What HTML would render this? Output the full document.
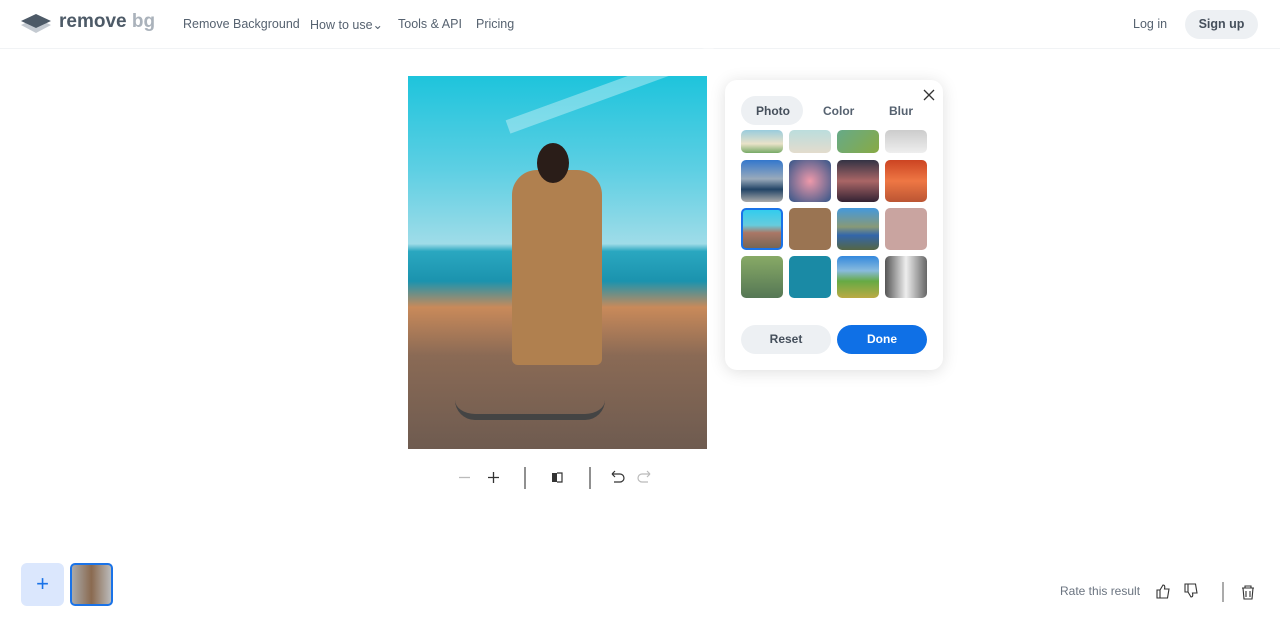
<!DOCTYPE html>
<html><head><meta charset="utf-8"><style>
*{margin:0;padding:0;box-sizing:border-box}
body{width:1280px;height:624px;background:#fff;font-family:"Liberation Sans",sans-serif;position:relative;overflow:hidden;color:#454f5b}
.a{position:absolute}
.nav{font-size:12.5px;color:#566270;top:17px}
.t{position:absolute;width:42px;height:42px;border-radius:5px}
</style></head><body>
<div class="a" style="left:0;top:48px;width:1280px;height:1px;background:#f1f3f5"></div>
<svg class="a" style="left:20px;top:13px" width="32" height="22" viewBox="0 0 32 22"><path d="M1 12 L16 20 L31 12 L16 5Z" fill="#c4cad1"/><path d="M1 8 L16 1 L31 8 L16 15Z" fill="#4d5a67"/></svg>
<div class="a" style="left:59px;top:11px;font-size:19px;font-weight:bold;color:#4d5a67">remove<span style="color:#aab2bb"> bg</span></div>
<div class="a nav" style="left:183px">Remove Background</div>
<div class="a nav" style="left:310px">How to use⌄</div>
<div class="a nav" style="left:398px">Tools &amp; API</div>
<div class="a nav" style="left:476px">Pricing</div>
<div class="a nav" style="left:1133px">Log in</div>
<div class="a" style="left:1185px;top:10px;width:73px;height:29px;border-radius:15px;background:#edf0f3;font-size:12.5px;font-weight:bold;color:#454f5b;text-align:center;line-height:29px">Sign up</div>

<div class="a" style="left:408px;top:76px;width:299px;height:373px;background:linear-gradient(180deg,#1ec4dc 0%,#5dcfe3 25%,#9fdce8 45%,#2aa7c0 47%,#1b93ae 55%,#c98a5a 62%,#8a6a55 75%,#6e5b50 100%)"></div>
<div class="a" style="left:508px;top:120px;width:220px;height:14px;background:rgba(255,255,255,.35);transform:rotate(-20deg);transform-origin:left"></div>
<div class="a" style="left:512px;top:170px;width:90px;height:195px;background:#b0804f;border-radius:25px 25px 6px 6px"></div>
<div class="a" style="left:537px;top:143px;width:32px;height:40px;background:#2a1d18;border-radius:50%"></div>
<div class="a" style="left:455px;top:380px;width:150px;height:40px;border-bottom:6px solid #444;border-radius:0 0 20px 20px"></div>

<svg class="a" style="left:455px;top:466px" width="210" height="24"><path d="M4 11.5h11" stroke="#bbb" stroke-width="1.3"/><path d="M33 11.5h11M38.5 6v11" stroke="#333" stroke-width="1.3"/><path d="M70 1v22M135 1v22" stroke="#555" stroke-width="1.3"/><rect x="97" y="7" width="5" height="9" fill="#333"/><path d="M102 7h5v9h-5" stroke="#333" fill="none" stroke-width="1.2"/><path d="M157 8h8a4 4 0 0 1 0 8h-6M157 8l3-3M157 8l3 3" stroke="#333" fill="none" stroke-width="1.2"/><path d="M195 8h-8a4 4 0 0 0 0 8h6M195 8l-3-3M195 8l-3 3" stroke="#bbb" fill="none" stroke-width="1.2"/></svg>

<div class="a" style="left:725px;top:80px;width:218px;height:290px;background:#fff;border-radius:12px;box-shadow:0 2px 16px rgba(0,0,0,.13)"></div>
<div class="a" style="left:741px;top:96px;width:62px;height:29px;border-radius:15px;background:#edf0f3"></div>
<div class="a" style="left:756px;top:104px;font-size:12px;font-weight:bold;color:#454f5b">Photo</div>
<div class="a" style="left:823px;top:104px;font-size:12px;font-weight:bold;color:#566270">Color</div>
<div class="a" style="left:889px;top:104px;font-size:12px;font-weight:bold;color:#566270">Blur</div>
<svg class="a" style="left:923px;top:89px" width="12" height="12"><path d="M1 1L11 11M11 1L1 11" stroke="#333" stroke-width="1.3"/></svg>
<div class="t" style="left:741px;top:130px;height:23px;background:linear-gradient(#9cd 0,#e9e2c8 60%,#7a6)"></div>
<div class="t" style="left:789px;top:130px;height:23px;background:linear-gradient(#bdd,#e3dccd)"></div>
<div class="t" style="left:837px;top:130px;height:23px;background:linear-gradient(135deg,#6a8,#8a4)"></div>
<div class="t" style="left:885px;top:130px;height:23px;background:linear-gradient(#ccc,#eee)"></div>
<div class="t" style="left:741px;top:160px;background:linear-gradient(#37c,#9ab 45%,#246 70%,#aaa)"></div>
<div class="t" style="left:789px;top:160px;background:radial-gradient(#e9a,#358)"></div>
<div class="t" style="left:837px;top:160px;background:linear-gradient(#334,#a66,#323)"></div>
<div class="t" style="left:885px;top:160px;background:linear-gradient(#c42,#e74,#b53)"></div>
<div class="t" style="left:741px;top:208px;border:2px solid #1a73e8;background:linear-gradient(#3ce,#6cd 40%,#a76 60%,#765)"></div>
<div class="t" style="left:789px;top:208px;background:#9a7452"></div>
<div class="t" style="left:837px;top:208px;background:linear-gradient(#49d,#897 45%,#36a 65%,#564)"></div>
<div class="t" style="left:885px;top:208px;background:#c9a4a0"></div>
<div class="t" style="left:741px;top:256px;background:linear-gradient(#8a6,#575)"></div>
<div class="t" style="left:789px;top:256px;background:#1a8aa5"></div>
<div class="t" style="left:837px;top:256px;background:linear-gradient(#38d,#8bd 35%,#6a4 60%,#ba4)"></div>
<div class="t" style="left:885px;top:256px;background:linear-gradient(90deg,#555,#eee,#666)"></div>
<div class="a" style="left:741px;top:325px;width:90px;height:29px;border-radius:15px;background:#edf0f3;font-size:12px;font-weight:bold;color:#454f5b;text-align:center;line-height:29px">Reset</div>
<div class="a" style="left:837px;top:325px;width:90px;height:29px;border-radius:15px;background:#0f70e6;font-size:12px;font-weight:bold;color:#fff;text-align:center;line-height:29px">Done</div>

<div class="a" style="left:21px;top:563px;width:43px;height:43px;border-radius:6px;background:#dbe7fd;color:#1a73e8;font-size:22px;text-align:center;line-height:41px">+</div>
<div class="a" style="left:70px;top:563px;width:43px;height:43px;border-radius:5px;border:2px solid #1a73e8;background:linear-gradient(90deg,#aaa,#8a6a50 50%,#bbb)"></div>

<div class="a" style="left:1060px;top:584px;font-size:12px;color:#6b7480">Rate this result</div>
<svg class="a" style="left:1155px;top:582px" width="100" height="20"><path d="M2 8h3v8H2zM5 8l3-5c2 0 2 2 1.5 4H14l-1.5 9H5" stroke="#333" fill="none" stroke-width="1.1"/><path d="M32 4h3v8h-3zM35 12l3 5c2 0 2-2 1.5-4H44l-1.5-9H35" stroke="#333" fill="none" stroke-width="1.1" transform="translate(-2,-2)"/><path d="M68 -2v22" stroke="#666" stroke-width="1.1"/><path d="M88 6h12M91 6V4h6v2M89 6l1 11h8l1-11M92 9v6M96 9v6" stroke="#333" fill="none" stroke-width="1.1" transform="translate(-1,0)"/></svg>
</body></html>
